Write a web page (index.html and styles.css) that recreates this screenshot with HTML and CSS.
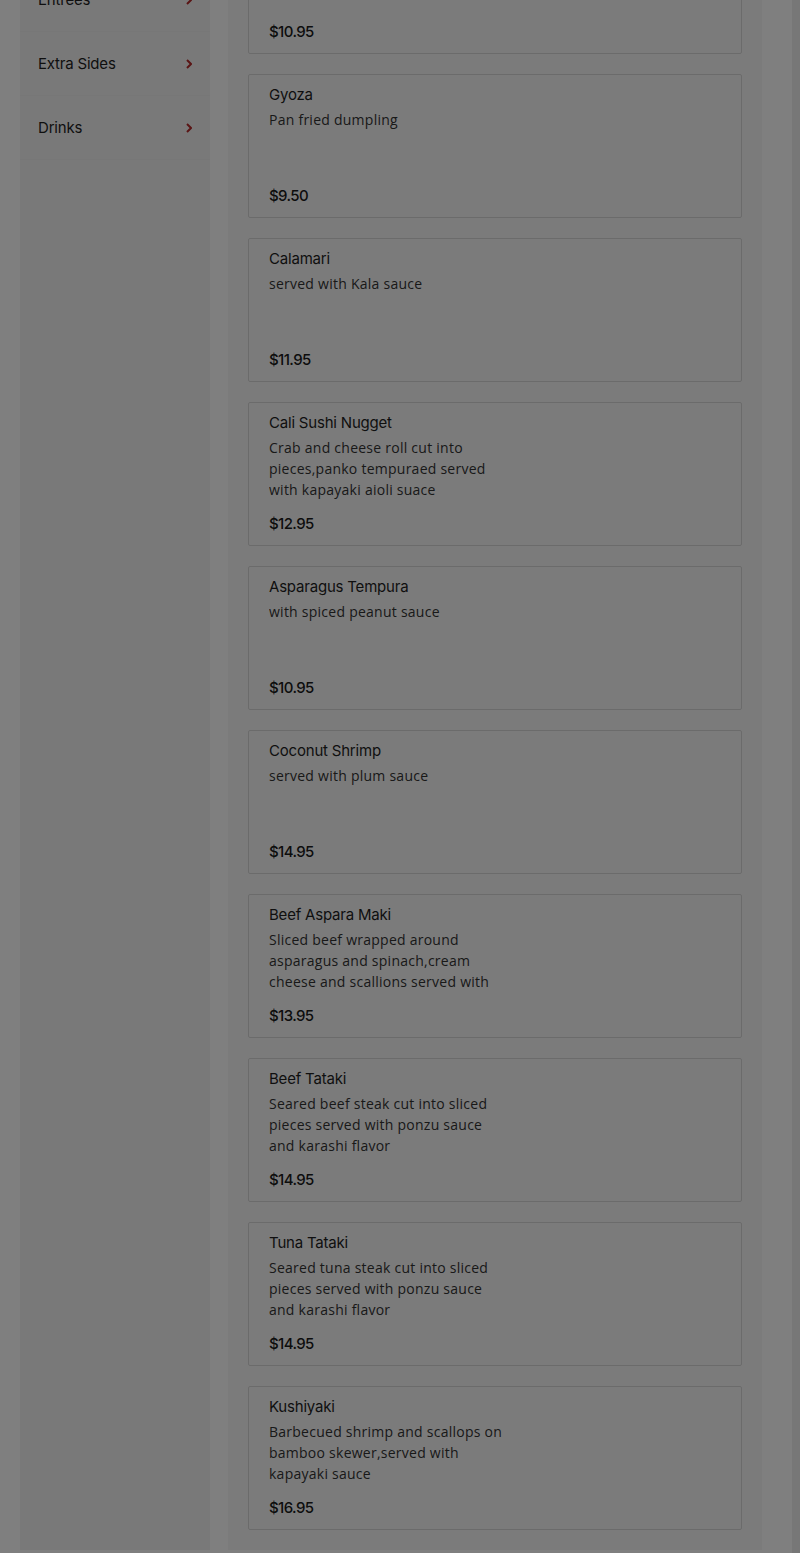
FILE: index.html
```html
<!DOCTYPE html>
<html lang="en">
<head>
<meta charset="utf-8">
<title>Menu</title>
<link rel="stylesheet" href="styles.css">
</head>
<body>
<div class="layout">
  <aside class="sidebar">
    <a class="cat" href="#">Appetizers<svg class="chev" viewBox="0 0 6 10" width="6" height="10"><path d="M1 1l4 4-4 4" fill="none" stroke="currentColor" stroke-width="2"/></svg></a>
    <a class="cat" href="#">Entrees<svg class="chev" viewBox="0 0 6 10" width="6" height="10"><path d="M1 1l4 4-4 4" fill="none" stroke="currentColor" stroke-width="2"/></svg></a>
    <a class="cat" href="#">Extra Sides<svg class="chev" viewBox="0 0 6 10" width="6" height="10"><path d="M1 1l4 4-4 4" fill="none" stroke="currentColor" stroke-width="2"/></svg></a>
    <a class="cat" href="#">Drinks<svg class="chev" viewBox="0 0 6 10" width="6" height="10"><path d="M1 1l4 4-4 4" fill="none" stroke="currentColor" stroke-width="2"/></svg></a>
  </aside>
  <main class="panel">
    <div class="card"><div class="title">Agedashi Tofu</div><div class="desc">Fried tofu in light dashi broth</div><div class="price">$10.95</div></div>
    <div class="card"><div class="title">Gyoza</div><div class="desc">Pan fried dumpling</div><div class="price">$9.50</div></div>
    <div class="card"><div class="title">Calamari</div><div class="desc">served with Kala sauce</div><div class="price">$11.95</div></div>
    <div class="card"><div class="title">Cali Sushi Nugget</div><div class="desc">Crab and cheese roll cut into pieces,panko tempuraed served with kapayaki aioli suace</div><div class="price">$12.95</div></div>
    <div class="card"><div class="title">Asparagus Tempura</div><div class="desc">with spiced peanut sauce</div><div class="price">$10.95</div></div>
    <div class="card"><div class="title">Coconut Shrimp</div><div class="desc">served with plum sauce</div><div class="price">$14.95</div></div>
    <div class="card"><div class="title">Beef Aspara Maki</div><div class="desc">Sliced beef wrapped around asparagus and spinach,cream cheese and scallions served with</div><div class="price">$13.95</div></div>
    <div class="card"><div class="title">Beef Tataki</div><div class="desc">Seared beef steak cut into sliced pieces served with ponzu sauce and karashi flavor</div><div class="price">$14.95</div></div>
    <div class="card"><div class="title">Tuna Tataki</div><div class="desc">Seared tuna steak cut into sliced pieces served with ponzu sauce and karashi flavor</div><div class="price">$14.95</div></div>
    <div class="card"><div class="title">Kushiyaki</div><div class="desc">Barbecued shrimp and scallops on bamboo skewer,served with kapayaki sauce</div><div class="price">$16.95</div></div>
  </main>
</div>
<div class="scrolltrack"></div>
<div class="overlay"></div>
</body>
</html>
```

FILE: styles.css
```css
html, body {
  margin: 0;
  padding: 0;
}
body {
  background: #ffffff;
  font-family: "Open Sans", "Liberation Sans", sans-serif;
  color: #333;
  overflow: hidden;
}
.layout {
  display: flex;
  align-items: stretch;
  gap: 18px;
  margin-top: -110px;
  padding-left: 20px;
}
.sidebar {
  width: 190px;
  flex: none;
  background: #f3f3f3;
  padding-top: 14px;
}
.cat {
  display: flex;
  align-items: center;
  justify-content: space-between;
  height: 63px;
  padding: 0 18px 0 18px;
  border-bottom: 1px solid #efefef;
  font-family: "Inter", "Liberation Sans", sans-serif;
  font-size: 15px;
  font-weight: 400;
  letter-spacing: -0.2px;
  color: #1e1e1e;
  text-decoration: none;
}
.chev {
  color: #b52a2a;
}
.panel {
  width: 494px;
  flex: none;
  background: #f7f7f7;
  padding: 20px 20px 20px;
  display: flex;
  flex-direction: column;
  gap: 20px;
}
.card {
  border: 1px solid #d6d6d6;
  border-radius: 2px;
  padding: 10px 20px 11px;
}
.title {
  font-family: "Inter", "Liberation Sans", sans-serif;
  font-size: 15px;
  font-weight: 400;
  letter-spacing: -0.2px;
  line-height: 20px;
  color: #1e1e1e;
}
.desc {
  margin-top: 4px;
  width: 240px;
  height: 63px;
  overflow: hidden;
  font-size: 14px;
  letter-spacing: 0.25px;
  line-height: 21px;
  color: #333;
}
.price {
  margin-top: 14px;
  font-family: "Inter", "Liberation Sans", sans-serif;
  font-size: 15px;
  font-weight: 500;
  letter-spacing: -0.6px;
  line-height: 20px;
  color: #1a1a1a;
}
.scrolltrack {
  position: fixed;
  top: 0;
  right: 0;
  width: 8px;
  height: 100%;
  background: #efefef;
}
.overlay {
  position: fixed;
  inset: 0;
  background: rgba(0, 0, 0, 0.5);
}
```
